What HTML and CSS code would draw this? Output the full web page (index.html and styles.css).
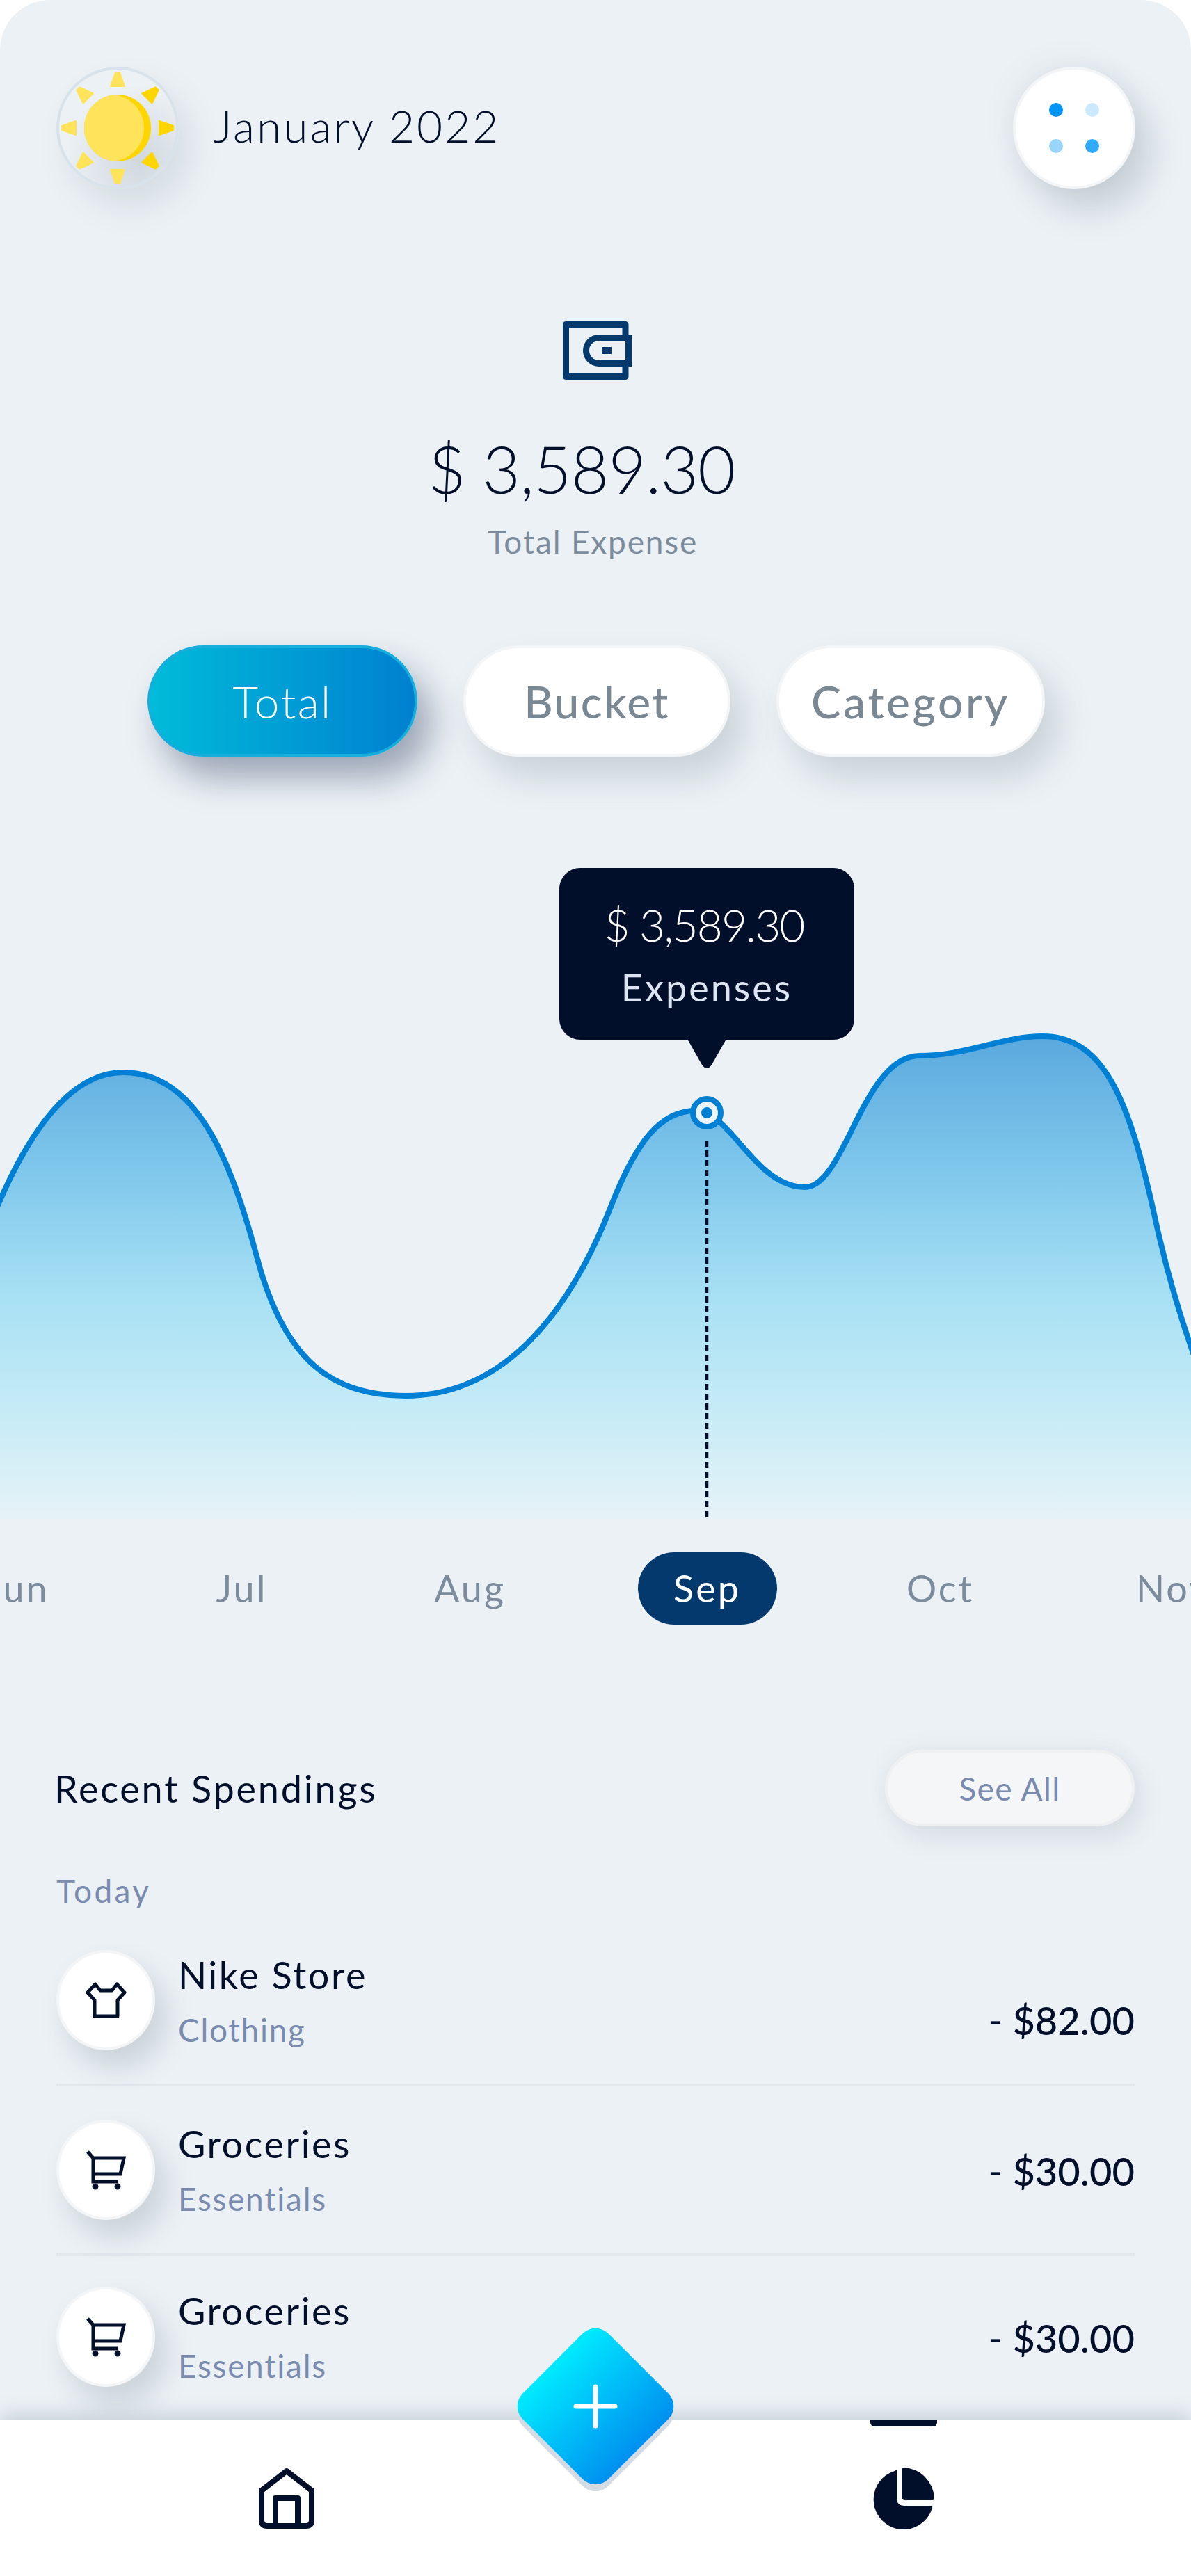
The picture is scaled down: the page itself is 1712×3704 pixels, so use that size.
FILE: index.html
```html
<!DOCTYPE html>
<html lang="en">
	<head>
		<meta charset="UTF-8">
		<meta name="viewport" content="width=device-width, initial-scale=1.0">
		<title>Expense Tracker</title>
		<link rel="stylesheet" href="styles.css">
	</head>
	<body>
	<div class="screen">
		<main class="card">
			<header class="head">
				<div class="head-left">
					<div class="sun">
						<svg width="168" height="168" viewBox="4 4 168 168">
							<g class="ray-light">
								<polygon points="85,8 91,8 98,28 78,28"/>
								<polygon points="85,8 91,8 98,28 78,28" transform="rotate(180 88 88)"/>
								<polygon points="85,8 91,8 98,28 78,28" transform="rotate(225 88 88)"/>
								<polygon points="85,8 91,8 98,28 78,28" transform="rotate(270 88 88)"/>
								<polygon points="85,8 91,8 98,28 78,28" transform="rotate(315 88 88)"/>
							</g>
							<g class="ray-dark">
								<polygon points="85,8 91,8 98,28 78,28" transform="rotate(45 88 88)"/>
								<polygon points="85,8 91,8 98,28 78,28" transform="rotate(90 88 88)"/>
								<polygon points="85,8 91,8 98,28 78,28" transform="rotate(135 88 88)"/>
							</g>
							<clipPath id="sun-clip"><circle cx="88" cy="88" r="48"/></clipPath>
							<circle cx="88" cy="88" r="48" fill="#ffd500"/>
							<circle cx="78" cy="88" r="48" fill="#ffe35b" clip-path="url(#sun-clip)"/>
						</svg>
					</div>
					<h1 class="month-title">January 2022</h1>
				</div>
				<button class="menu-btn">
					<span class="dot dot-a"></span>
					<span class="dot dot-b"></span>
					<span class="dot dot-c"></span>
					<span class="dot dot-d"></span>
				</button>
			</header>

			<section class="summary">
				<svg class="wallet" width="99" height="84" viewBox="0 0 99 84" fill="none" stroke="#03396c" stroke-width="9">
					<path d="M90 20V4.5H4.5V79.5H90V64" stroke-linejoin="round"/>
					<path d="M94.5 23.5H52A18.5 18.5 0 0 0 52 60.5H94.5Z"/>
					<rect x="56" y="37" width="14" height="10" fill="#03396c" stroke="none"/>
				</svg>
				<div class="total">$ 3,589.30</div>
				<div class="total-label">Total Expense</div>
			</section>

			<nav class="tabs">
				<button class="tab tab-active">Total</button>
				<button class="tab tab-bucket">Bucket</button>
				<button class="tab tab-category">Category</button>
			</nav>

			<section class="chart">
				<svg class="chart-svg" width="1712" height="960" viewBox="0 1240 1712 960">
					<defs>
						<linearGradient id="area" gradientUnits="userSpaceOnUse" x1="0" y1="1490" x2="0" y2="2184">
							<stop offset="0" stop-color="#5aa9de"/>
							<stop offset="0.3" stop-color="#82c9ec"/>
							<stop offset="0.55" stop-color="#a9e1f4"/>
							<stop offset="0.8" stop-color="#c9ecf6"/>
							<stop offset="1" stop-color="#e6f2f7"/>
						</linearGradient>
					</defs>
					<path fill="url(#area)" d="M-6 1740C40 1630 100 1542 177 1542C280 1542 330 1660 370 1810C410 1960 480 2007 583 2007C710 2007 810 1910 878 1735C915 1640 950 1597 1000 1597C1050 1597 1085 1707 1157 1707C1215 1707 1240 1518 1322 1518C1390 1518 1440 1490 1499 1490C1590 1490 1625 1590 1660 1750C1675 1820 1695 1890 1720 1960V2184H-6Z"/>
					<path fill="none" stroke="#0080d4" stroke-width="8" d="M-6 1740C40 1630 100 1542 177 1542C280 1542 330 1660 370 1810C410 1960 480 2007 583 2007C710 2007 810 1910 878 1735C915 1640 950 1597 1000 1597C1050 1597 1085 1707 1157 1707C1215 1707 1240 1518 1322 1518C1390 1518 1440 1490 1499 1490C1590 1490 1625 1590 1660 1750C1675 1820 1695 1890 1720 1960"/>
					<line x1="1016" y1="1640" x2="1016" y2="2184" stroke="#020f2b" stroke-width="4.5" stroke-dasharray="9 5"/>
					<circle cx="1016" cy="1600" r="20" fill="#eef3f6" stroke="#0080d4" stroke-width="8"/>
					<circle cx="1016" cy="1600" r="8" fill="#0080d4"/>
					<path fill="#020f2b" d="M988 1494H1044L1023 1531Q1016 1541 1009 1531Z"/>
				</svg>
				<div class="tooltip">
					<div class="tooltip-value">$ 3,589.30</div>
					<div class="tooltip-label">Expenses</div>
				</div>
			</section>

			<div class="months">
				<span class="month">Jun</span>
				<span class="month">Jul</span>
				<span class="month">Aug</span>
				<span class="month month-active"><b>Sep</b></span>
				<span class="month">Oct</span>
				<span class="month">Nov</span>
			</div>

			<section class="recent">
				<div class="recent-head">
					<h2 class="recent-title">Recent Spendings</h2>
					<button class="see-all">See All</button>
				</div>
				<div class="day">Today</div>

				<div class="row row-line">
					<div class="row-icon">
						<svg width="59" height="52" viewBox="0 0 59 52" fill="none" stroke="#020f2b" stroke-width="5" stroke-linejoin="round">
							<path d="M14 3L21 12H38L45 3L56 15L46 26V49H13V26L3 15Z"/>
						</svg>
					</div>
					<div class="row-text row-text-first">
						<div class="row-name">Nike Store</div>
						<div class="row-sub">Clothing</div>
					</div>
					<div class="row-amount row-amount-low">- $82.00</div>
				</div>

				<div class="row row-line">
					<div class="row-icon">
						<svg width="57" height="57" viewBox="0 0 57 57" fill="none" stroke="#020f2b" stroke-width="5">
							<path d="M2 2L10 11V45H46M10 11H54L49 34H10"/>
							<circle cx="13" cy="52" r="4.5" fill="#020f2b" stroke="none"/>
							<circle cx="45" cy="52" r="4.5" fill="#020f2b" stroke="none"/>
						</svg>
					</div>
					<div class="row-text">
						<div class="row-name">Groceries</div>
						<div class="row-sub">Essentials</div>
					</div>
					<div class="row-amount">- $30.00</div>
				</div>

				<div class="row row-end">
					<div class="row-icon">
						<svg width="57" height="57" viewBox="0 0 57 57" fill="none" stroke="#020f2b" stroke-width="5">
							<path d="M2 2L10 11V45H46M10 11H54L49 34H10"/>
							<circle cx="13" cy="52" r="4.5" fill="#020f2b" stroke="none"/>
							<circle cx="45" cy="52" r="4.5" fill="#020f2b" stroke="none"/>
						</svg>
					</div>
					<div class="row-text">
						<div class="row-name">Groceries</div>
						<div class="row-sub">Essentials</div>
					</div>
					<div class="row-amount">- $30.00</div>
				</div>
			</section>
		</main>

		<footer class="nav">
			<a class="nav-item">
				<svg width="80" height="88" viewBox="0 0 80 88" fill="none" stroke="#020f2b" stroke-width="8" stroke-linejoin="round">
					<path d="M4 33L40 5L76 33V76Q76 84 68 84H12Q4 84 4 76Z"/>
					<path d="M24 84V44H56V84"/>
				</svg>
			</a>
			<a class="nav-item nav-item-active">
				<svg width="90" height="90" viewBox="0 0 90 90" fill="#020f2b">
					<path d="M35 4V44Q35 55 46 55H84Q87 55 86 58A43 43 0 1 1 32 5Q35 3 35 4Z"/>
					<path d="M42 3Q42 0 45 0A46 46 0 0 1 89 44Q89 47 86 47H47Q42 47 42 42Z"/>
				</svg>
			</a>
		</footer>

		<button class="fab">
			<svg class="fab-plus" width="64" height="64" viewBox="0 0 64 64" stroke="#fff" stroke-width="7" stroke-linecap="round">
				<path d="M32 4V60M4 32H60"/>
			</svg>
		</button>
	</div>
	</body>
</html>
```

FILE: styles.css
```css
* {
	box-sizing: border-box;
}
body {
	margin: 0;
	background: #fff;
	font-family: 'Lato', 'Open Sans', sans-serif;
	color: #020f2b;
}
button {
	font-family: inherit;
	padding: 0;
	cursor: pointer;
}
h1, h2 {
	margin: 0;
	font-weight: 400;
}
.screen {
	position: relative;
	width: 1712px;
	height: 3704px;
	overflow: hidden;
	display: flex;
	flex-direction: column;
}
.card {
	height: 3480px;
	flex: none;
	background: #ecf1f5;
	border-radius: 72px 72px 0 0;
	overflow: hidden;
}

/* header */
.head {
	display: flex;
	justify-content: space-between;
	align-items: center;
	padding: 96px 80px 0 81px;
}
.head-left {
	display: flex;
	align-items: center;
	gap: 50px;
}
.sun {
	width: 176px;
	height: 176px;
	border-radius: 50%;
	border: 4px solid #d8e2ea;
	background: radial-gradient(circle at 68% 78%, rgba(60, 80, 100, .16), rgba(60, 80, 100, 0) 62%);
	box-shadow: 18px 26px 48px rgba(60, 80, 100, .12);
}
.sun svg {
	display: block;
}
.ray-light {
	fill: #ffe35b;
	stroke: #ffe35b;
	stroke-width: 2;
	stroke-linejoin: round;
}
.ray-dark {
	fill: #ffd500;
	stroke: #ffd500;
	stroke-width: 2;
	stroke-linejoin: round;
}
.month-title {
	font-size: 64px;
	font-weight: 300;
	letter-spacing: 3px;
	margin-bottom: 8px;
}
.menu-btn {
	width: 176px;
	height: 176px;
	border-radius: 50%;
	border: 4px solid #f3f5f7;
	background: #fff;
	box-shadow: 22px 30px 50px rgba(50, 70, 90, .2), -10px -12px 40px rgba(50, 70, 90, .05);
	display: grid;
	grid-template-columns: 20px 20px;
	gap: 32px;
	justify-content: center;
	align-content: center;
}
.dot {
	width: 20px;
	height: 20px;
	border-radius: 50%;
}
.dot-a { background: #0095f5; }
.dot-b { background: #cce8fb; }
.dot-c { background: #99d4fb; }
.dot-d { background: #33aaf7; }

/* summary */
.summary {
	margin-top: 190px;
	display: flex;
	flex-direction: column;
	align-items: center;
}
.wallet {
	display: block;
	margin-left: 4px;
}
.total {
	margin-top: 72px;
	padding-right: 40px;
	font-size: 94px;
	font-weight: 300;
	line-height: 112px;
	letter-spacing: -.8px;
}
.total-label {
	margin-top: 19px;
	padding-right: 8px;
	font-size: 46px;
	font-weight: 400;
	line-height: 60px;
	letter-spacing: 1.8px;
	color: #7c8c9c;
}

/* tabs */
.tabs {
	margin-top: 119px;
	margin-left: 2px;
	display: flex;
	justify-content: center;
	gap: 66px;
}
.tab {
	height: 160px;
	border-radius: 80px;
	border: 4px solid #f3f5f7;
	background: #fff;
	font-size: 64px;
	font-weight: 500;
	letter-spacing: 2.4px;
	color: #7a8894;
	box-shadow: 20px 30px 50px rgba(50, 70, 90, .18);
}
.tab-active {
	width: 388px;
	border-color: #17aedb;
	background: linear-gradient(90deg, #00bcd9, #0080d0);
	background-origin: border-box;
	color: #fff;
	font-weight: 300;
	box-shadow: 20px 30px 50px rgba(10, 30, 70, .36);
}
.tab-bucket {
	width: 384px;
}
.tab-category {
	width: 386px;
	letter-spacing: 3.6px;
}

/* chart */
.chart {
	position: relative;
	margin-top: 152px;
	height: 960px;
}
.chart-svg {
	display: block;
}
.tooltip {
	position: absolute;
	left: 804px;
	top: 8px;
	width: 424px;
	height: 247px;
	padding-top: 37px;
	border-radius: 30px;
	background: #020f2b;
	text-align: center;
}
.tooltip-value {
	padding-right: 8px;
	font-size: 64px;
	font-weight: 300;
	line-height: 90px;
	letter-spacing: -1.9px;
	color: #fff;
}
.tooltip-label {
	font-size: 54px;
	line-height: 90px;
	letter-spacing: 3px;
	color: #dde5f3;
}

/* months */
.months {
	margin-top: 32px;
	margin-left: -143px;
	height: 104px;
	display: grid;
	grid-template-columns: 336px 309px 347px 335px 335px 335px;
}
.month {
	font-size: 54px;
	font-weight: 400;
	line-height: 104px;
	letter-spacing: 3px;
	text-align: center;
	color: #7c8c9c;
}
.month-active b {
	display: inline-block;
	width: 200px;
	border-radius: 52px;
	background: #03396c;
	color: #fff;
	font-weight: 400;
}

/* recent */
.recent {
	margin-top: 180px;
	padding: 0 81px;
}
.recent-head {
	display: flex;
	justify-content: space-between;
	align-items: center;
}
.recent-title {
	margin-left: -3px;
	font-size: 54px;
	font-weight: 400;
	letter-spacing: 2.8px;
}
.see-all {
	width: 359px;
	height: 110px;
	border-radius: 55px;
	border: 4px solid #eef0f2;
	background: #f5f6f7;
	font-size: 46px;
	font-weight: 400;
	letter-spacing: 1.4px;
	color: #7a8bb0;
	box-shadow: 12px 18px 36px rgba(50, 70, 90, .1), -4px -8px 30px rgba(50, 70, 90, .04);
}
.day {
	margin-top: 63px;
	margin-bottom: 55px;
	font-size: 46px;
	font-weight: 400;
	line-height: 60px;
	letter-spacing: 3.4px;
	color: #7a8bb0;
}
.row {
	display: flex;
	align-items: center;
	gap: 33px;
	height: 144px;
	box-sizing: content-box;
}
.row-line {
	padding-bottom: 48px;
	margin-bottom: 48px;
	border-bottom: 4px solid #e2e7ec;
}
.row-end {
	margin-top: -4px;
}
.row-icon {
	flex: none;
	width: 142px;
	height: 144px;
	border-radius: 50%;
	border: 4px solid #f3f5f7;
	background: #fff;
	box-shadow: 16px 24px 40px rgba(50, 70, 90, .18);
	display: flex;
	align-items: center;
	justify-content: center;
}
.row-text {
	flex: 1;
	padding-top: 4px;
}
.row-text-first {
	padding-top: 6px;
}
.row-name {
	font-size: 54px;
	line-height: 79px;
	letter-spacing: 2.5px;
}
.row-sub {
	font-size: 46px;
	font-weight: 400;
	line-height: 79px;
	letter-spacing: 1.7px;
	color: #7a8bb0;
}
.row-amount {
	padding-top: 3px;
	font-size: 56px;
	font-weight: 500;
}
.row-amount-low {
	padding-top: 0;
	margin-top: 56px;
}

/* bottom nav */
.nav {
	position: relative;
	flex: 1;
	background: #fff;
	box-shadow: 0 -8px 26px rgba(70, 90, 120, .22);
	display: flex;
	justify-content: space-between;
	align-items: flex-start;
	padding: 68px 368px 0 372px;
}
.nav-item {
	position: relative;
	display: block;
}
.nav-item svg {
	display: block;
}
.nav-item-active::before {
	content: "";
	position: absolute;
	left: -3px;
	top: -68px;
	width: 96px;
	height: 9px;
	border-radius: 0 0 6px 6px;
	background: #020f2b;
}
.fab {
	position: absolute;
	left: 769px;
	top: 3373px;
	width: 174px;
	height: 174px;
	border: none;
	border-radius: 26px;
	background: linear-gradient(90deg, #00eaff, #0090f0);
	box-shadow: 7px 7px 0 #d5dbe3;
	transform: rotate(45deg);
	display: flex;
	align-items: center;
	justify-content: center;
}
.fab-plus {
	transform: rotate(-45deg);
}
```
